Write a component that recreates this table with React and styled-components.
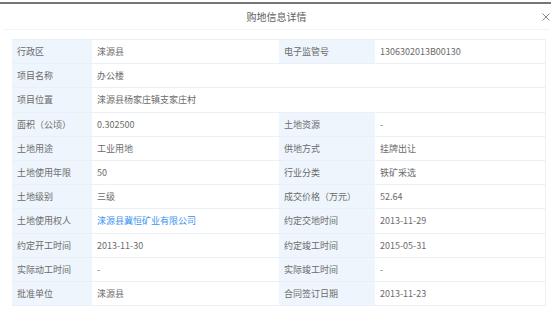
import React from 'react';
import styled, { createGlobalStyle } from 'styled-components';

const Global = createGlobalStyle`
  body {
    margin: 0;
    background: #fff;
    font-family: "Noto Sans CJK SC", "Noto Sans", sans-serif;
  }
`;

const Dialog = styled.div`
  width: 558px;
  height: 314px;
  padding-top: 2px;
  box-sizing: border-box;
`;

const TopBar = styled.div`
  width: 551px;
  height: 2px;
  background: #767676;
`;

const Header = styled.div`
  position: relative;
  width: 547px;
  margin-left: 3px;
  height: 25px;
  border-bottom: 1px solid #f3f3f3;
  display: flex;
  align-items: center;
  justify-content: center;
  font-size: 10px;
  color: #606060;
`;

const Close = styled.svg`
  position: absolute;
  right: 0;
  top: 9px;
  width: 8px;
  height: 8px;
`;

const Table = styled.div`
  margin: 9px 0 0 12px;
  width: 533px;
  display: grid;
  grid-template-columns: 80px 187px 96px 170px;
  border-top: 1px solid #e9f0f7;
  border-right: 1px solid #e9f0f7;
`;

const Cell = styled.div`
  height: 23.2px;
  border-bottom: 1px solid #e9f0f7;
  display: flex;
  align-items: center;
  padding-left: 5px;
  font-size: 9px;
  white-space: nowrap;
  color: ${p => (p.$link ? '#3a93f2' : '#6b6b6b')};
  background: ${p => (p.$label ? '#eef5fc' : '#fff')};
  grid-column: ${p => (p.$wide ? 'span 3' : 'auto')};
`;

const rows = [
  ['行政区', '涞源县', '电子监管号', '1306302013B00130'],
  ['项目名称', '办公楼'],
  ['项目位置', '涞源县杨家庄镇支家庄村'],
  ['面积（公顷）', '0.302500', '土地资源', '-'],
  ['土地用途', '工业用地', '供地方式', '挂牌出让'],
  ['土地使用年限', '50', '行业分类', '铁矿采选'],
  ['土地级别', '三级', '成交价格（万元）', '52.64'],
  ['土地使用权人', '涞源县冀恒矿业有限公司', '约定交地时间', '2013-11-29', true],
  ['约定开工时间', '2013-11-30', '约定竣工时间', '2015-05-31'],
  ['实际动工时间', '-', '实际竣工时间', '-'],
  ['批准单位', '涞源县', '合同签订日期', '2013-11-23'],
];

export default function App() {
  return (
    <Dialog>
      <Global />
      <TopBar />
      <Header>
        购地信息详情
        <Close viewBox="0 0 8 8">
          <path d="M0.5 0.5L7.5 7.5M7.5 0.5L0.5 7.5" stroke="#8a8a8a" strokeWidth="1" fill="none" />
        </Close>
      </Header>
      <Table>
        {rows.map(([l1, v1, l2, v2, link], i) => (
          <React.Fragment key={i}>
            <Cell $label>{l1}</Cell>
            {l2 ? (
              <>
                <Cell $link={link}>{v1}</Cell>
                <Cell $label>{l2}</Cell>
                <Cell>{v2}</Cell>
              </>
            ) : (
              <Cell $wide>{v1}</Cell>
            )}
          </React.Fragment>
        ))}
      </Table>
    </Dialog>
  );
}
